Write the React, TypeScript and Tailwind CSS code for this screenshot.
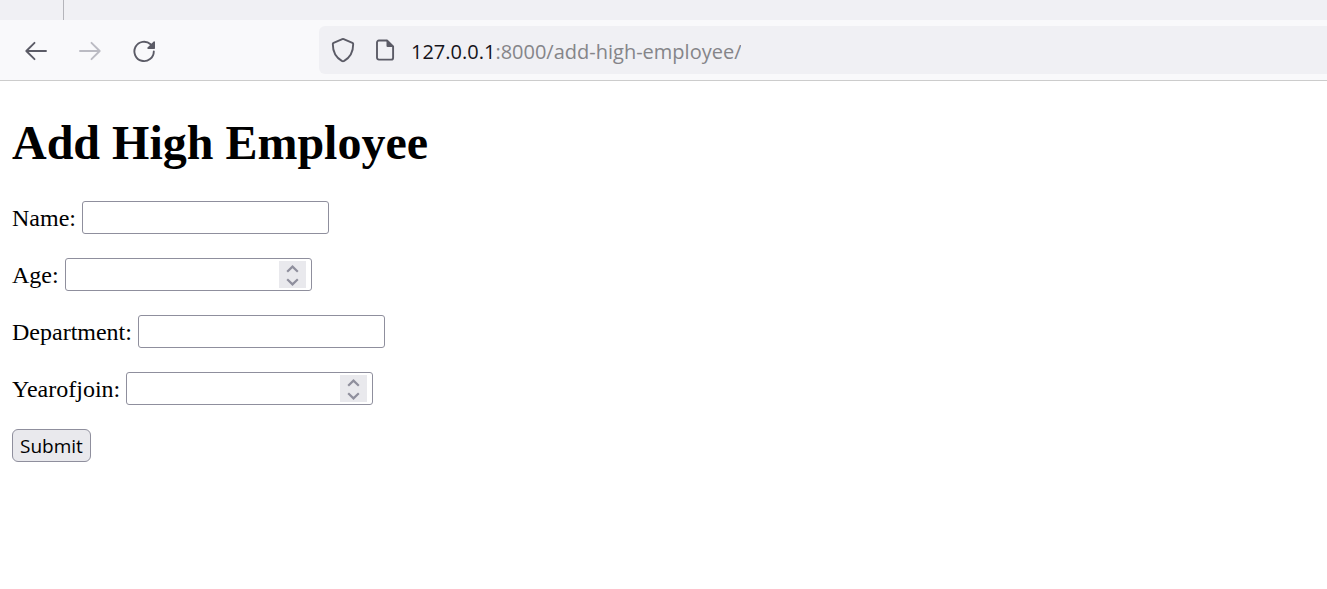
import React from "react";

function BackIcon() {
  return (
    <svg width="24" height="24" viewBox="0 0 24 24" fill="none" stroke="currentColor" strokeWidth="1.9" strokeLinecap="round" strokeLinejoin="round" aria-hidden="true">
      <path d="M22 12H2.600M10.500 3.800L2.300 12l8.200 8.200" />
    </svg>
  );
}

function ForwardIcon() {
  return (
    <svg width="24" height="24" viewBox="0 0 24 24" fill="none" stroke="currentColor" strokeWidth="1.9" strokeLinecap="round" strokeLinejoin="round" aria-hidden="true">
      <path d="M2 12h19.400M13.500 3.800L21.700 12l-8.200 8.200" />
    </svg>
  );
}

function ReloadIcon() {
  return (
    <svg width="24" height="24" viewBox="0 0 24 24" fill="none" aria-hidden="true">
      <path d="M21.800 12.500A9.700 9.700 0 1 1 18.600 5.200" stroke="currentColor" strokeWidth="1.9" strokeLinecap="round" />
      <path d="M23 3v6.200a.7.7 0 0 1-.7.700h-6.200c-.8 0-1.100-.8-.6-1.300l6.200-6.200c.5-.5 1.300-.1 1.300.6z" fill="currentColor" />
    </svg>
  );
}

function ShieldIcon() {
  return (
    <svg width="24" height="26" viewBox="0 0 24 26" fill="none" stroke="currentColor" strokeWidth="1.9" strokeLinejoin="round" aria-hidden="true">
      <path d="M11.300 2.200Q12 1.900 12.700 2.200L21.400 5.800Q22.200 6.200 22.200 7.100C22.200 14.500 19.200 20.500 13.200 23.900Q12 24.500 10.800 23.900C4.800 20.500 1.800 14.500 1.800 7.100Q1.800 6.200 2.600 5.800Z" />
    </svg>
  );
}

function PageIcon() {
  return (
    <svg width="20" height="24" viewBox="0 0 20 24" fill="none" aria-hidden="true">
      <path d="M3.900 2.500H12L18.100 8.500V19.700a1.900 1.900 0 0 1-1.900 1.900H3.900A1.900 1.900 0 0 1 2 19.700V4.400a1.900 1.900 0 0 1 1.900-1.900Z" stroke="currentColor" strokeWidth="1.9" strokeLinejoin="round" />
      <path d="M11.500 1.800V8a1 1 0 0 0 1 1H19Z" fill="currentColor" />
    </svg>
  );
}

function Spinner({ onStep }: { onStep: (delta: number) => void }) {
  return (
    <span className="absolute inset-y-[3px] right-[6px] flex w-[27px] flex-col bg-[#e9e9ed] text-[#8f8f9d]">
      <button type="button" tabIndex={-1} aria-label="Increase" onClick={() => onStep(1)} className="flex flex-1 items-center justify-center pt-0.5">
        <svg width="13" height="8" viewBox="0 0 13 8" fill="none" stroke="currentColor" strokeWidth="2.200" aria-hidden="true">
          <path d="M1.200 6.700L6.500 1.600l5.300 5.100" />
        </svg>
      </button>
      <button type="button" tabIndex={-1} aria-label="Decrease" onClick={() => onStep(-1)} className="flex flex-1 items-center justify-center">
        <svg width="13" height="8" viewBox="0 0 13 8" fill="none" stroke="currentColor" strokeWidth="2.200" aria-hidden="true">
          <path d="M1.200 1.300l5.300 5.100 5.300-5.100" />
        </svg>
      </button>
    </span>
  );
}

function Field({ id, label, type }: { id: string; label: string; type: "text" | "number" }) {
  const input = React.useRef<HTMLInputElement>(null);
  const step = (delta: number) => {
    if (delta > 0) input.current?.stepUp();
    else input.current?.stepDown();
  };
  return (
    <div className="flex items-center gap-1.5">
      <label htmlFor={id}>{label}:</label>
      <span className="relative flex">
        <input
          ref={input}
          id={id}
          name={id}
          type={type}
          className="h-[33px] w-[247px] appearance-none rounded-[3px] border border-[#8f8f9d] bg-white px-1 font-['Open_Sans',sans-serif] text-xl [appearance:textfield]"
        />
        {type === "number" && <Spinner onStep={step} />}
      </span>
    </div>
  );
}

export default function App() {
  return (
    <div className="min-h-screen bg-white">
      <header className="border-b border-[#cccccc] bg-[#f9f9fb]">
        <div className="h-5 bg-[#f0f0f4]">
          <div className="h-full w-16 border-r border-[#b4b4ba]" />
        </div>
        <nav aria-label="Browser" className="flex h-[60px] items-center">
          <div className="flex w-[319px] shrink-0 items-center gap-[30px] pt-0.5 pl-6 text-[#5b5b66]">
            <button type="button" aria-label="Back"><BackIcon /></button>
            <button type="button" aria-label="Forward" disabled className="text-[#bbbbc3]"><ForwardIcon /></button>
            <button type="button" aria-label="Reload"><ReloadIcon /></button>
          </div>
          <div className="flex h-12 min-w-0 flex-1 items-center rounded-l-md bg-[#f0f0f4] pl-3 text-[#5b5b66]">
            <button type="button" aria-label="Tracking protection"><ShieldIcon /></button>
            <button type="button" aria-label="Site information" className="ml-5"><PageIcon /></button>
            <div role="textbox" aria-label="Address" className="ml-4 truncate pt-[3px] font-['Open_Sans',sans-serif] text-xl text-[#858589]">
              <span className="text-[#15141a]">127.0.0.1</span>:8000/add-high-employee/
            </div>
          </div>
        </nav>
      </header>
      <main className="px-3 pt-[34px] font-['Liberation_Serif',serif] text-2xl text-black">
        <h1 className="text-5xl leading-[56px] font-bold">Add High Employee</h1>
        <form className="mt-[30px] flex flex-col items-start gap-6" onSubmit={(e) => e.preventDefault()}>
          <Field id="name" label="Name" type="text" />
          <Field id="age" label="Age" type="number" />
          <Field id="department" label="Department" type="text" />
          <Field id="yearofjoin" label="Yearofjoin" type="number" />
          <button type="submit" className="h-[33px] rounded-md border border-[#8f8f9d] bg-[#e9e9ed] px-[7px] pt-0.5 font-['Open_Sans',sans-serif] text-[19px] leading-none">
            Submit
          </button>
        </form>
      </main>
    </div>
  );
}
